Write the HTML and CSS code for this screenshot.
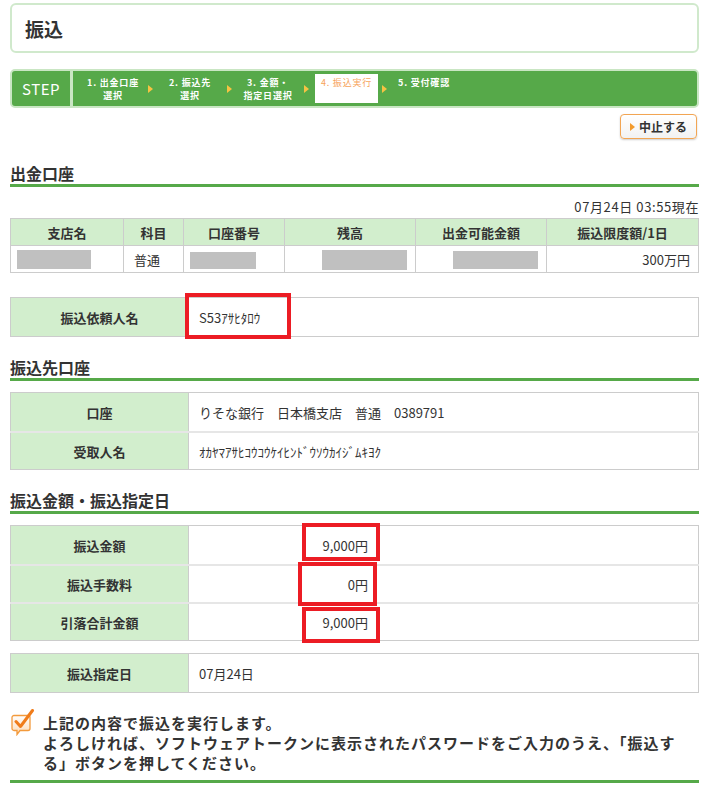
FILE: index.html
```html
<!DOCTYPE html>
<html lang="ja">
<head>
<meta charset="UTF-8">
<title>振込</title>
<link rel="stylesheet" href="styles.css">
</head>
<body>
<div class="page">
    <div class="title-box">
        <h1>振込</h1>
    </div>

    <div class="step-bar">
        <div class="step-label">STEP</div>
        <ol class="steps">
            <li class="step s1">1. 出金口座<br>選択</li>
            <li class="arrow a1"></li>
            <li class="step s2">2. 振込先<br>選択</li>
            <li class="arrow"></li>
            <li class="step s3">3. 金額・<br>指定日選択</li>
            <li class="arrow"></li>
            <li class="step s4 current">4. 振込実行</li>
            <li class="arrow"></li>
            <li class="step s5">5. 受付確認</li>
        </ol>
    </div>

    <div class="actions">
        <button class="btn-cancel"><span class="tri"></span>中止する</button>
    </div>

    <h2 class="sec-title">出金口座</h2>
    <p class="stamp">07月24日 03:55現在</p>
    <table class="acct">
        <tr>
            <th class="c1">支店名</th>
            <th class="c2">科目</th>
            <th class="c3">口座番号</th>
            <th class="c4">残高</th>
            <th class="c5">出金可能金額</th>
            <th class="c6">振込限度額/1日</th>
        </tr>
        <tr>
            <td><span class="hide h-branch"></span></td>
            <td class="kind">普通</td>
            <td><span class="hide h-no"></span></td>
            <td class="num"><span class="hide h-bal"></span></td>
            <td class="num"><span class="hide h-avail"></span></td>
            <td class="num">300万円</td>
        </tr>
    </table>

    <div class="marked req">
        <table class="info">
            <tr>
                <th>振込依頼人名</th>
                <td>S53ｱｻﾋﾀﾛｳ</td>
            </tr>
        </table>
        <span class="mark m-req"></span>
    </div>

    <h2 class="sec-title">振込先口座</h2>
    <table class="info">
        <tr>
            <th>口座</th>
            <td>りそな銀行　日本橋支店　普通　0389791</td>
        </tr>
        <tr>
            <th>受取人名</th>
            <td>ｵｶﾔﾏｱｻﾋｺｳｺｳｹｲﾋﾝﾄﾞｳｿｳｶｲｼﾞﾑｷﾖｸ</td>
        </tr>
    </table>

    <h2 class="sec-title">振込金額・振込指定日</h2>
    <div class="marked">
        <table class="info">
            <tr>
                <th>振込金額</th>
                <td><span class="amount">9,000円</span></td>
            </tr>
            <tr>
                <th>振込手数料</th>
                <td><span class="amount">0円</span></td>
            </tr>
            <tr>
                <th>引落合計金額</th>
                <td><span class="amount">9,000円</span></td>
            </tr>
        </table>
        <span class="mark m-1"></span>
        <span class="mark m-2"></span>
        <span class="mark m-3"></span>
    </div>

    <table class="info date">
        <tr>
            <th>振込指定日</th>
            <td>07月24日</td>
        </tr>
    </table>

    <div class="notice">
        <svg class="check" width="26" height="27" viewBox="0 0 26 27">
            <defs>
                <linearGradient id="g" x1="0" y1="0" x2="0" y2="1">
                    <stop offset="0" stop-color="#ffffff"/>
                    <stop offset="1" stop-color="#fcd9b4"/>
                </linearGradient>
            </defs>
            <path d="M3 6.5 h14 a2 2 0 0 1 2 2 v11 a2 2 0 0 1 -2 2 h-8 l-3 4 v-4 h-3 a2 2 0 0 1 -2 -2 v-11 a2 2 0 0 1 2 -2 z" fill="url(#g)" stroke="#f39a3c" stroke-width="1.3"/>
            <path d="M5 12.5 l4.5 5 l12 -16" fill="none" stroke="#f07c1a" stroke-width="3" stroke-linecap="round" stroke-linejoin="round"/>
        </svg>
        <p>上記の内容で振込を実行します。<br>よろしければ、ソフトウェアトークンに表示されたパスワードをご入力のうえ、「振込する」ボタンを押してください。</p>
    </div>
</div>
</body>
</html>
```

FILE: styles.css
```css
body{
    margin: 0;
    background-color: #fff;
    color: #333;
    font-family: "Noto Sans CJK JP", "Noto Sans", sans-serif;
    font-size: 13px;
}

.page{
    padding: 3px 10px 0;
}

.title-box{
    height: 50px;
    box-sizing: border-box;
    border: 2px solid #d0e9cc;
    border-radius: 6px;
    display: flex;
    align-items: center;
    padding-left: 13px;
}

.title-box h1{
    margin: 0;
    font-size: 19px;
    font-weight: 700;
}

/* step bar */
.step-bar{
    margin-top: 16px;
    height: 39px;
    box-sizing: border-box;
    border: 2px solid #c9e6c3;
    border-radius: 5px;
    background-color: #56a949;
    display: flex;
    color: #fff;
}

.step-label{
    width: 58px;
    border-right: 3px solid #c9e6c3;
    display: flex;
    align-items: center;
    justify-content: center;
    font-size: 15px;
    letter-spacing: 0.5px;
}

.steps{
    list-style: none;
    margin: 0;
    padding: 0 0 0 7px;
    display: flex;
}

.step{
    padding-top: 5px;
    font-size: 9px;
    line-height: 13px;
    letter-spacing: 0.8px;
    font-weight: 700;
    text-align: center;
}

.s1{ width: 66px; }
.s2{ width: 74px; }
.s3{ width: 72px; }
.s5{ width: 74px; }

.s4{
    width: 63px;
    margin: 3px 4px 3px 6px;
    padding-top: 2px;
    background-color: #fff;
    color: #f7a35a;
    font-weight: 400;
}

.arrow{
    align-self: center;
    width: 0;
    height: 0;
    border-left: 5px solid #f6c343;
    border-top: 4.5px solid transparent;
    border-bottom: 4.5px solid transparent;
}

.a1{ margin-left: 2px; }

/* cancel */
.actions{
    margin-top: 6px;
    display: flex;
    justify-content: flex-end;
    padding-right: 2px;
}

.btn-cancel{
    width: 77px;
    height: 25px;
    border: 1px solid #f2a553;
    border-radius: 4px;
    background: linear-gradient(#fff, #f2f2f2);
    box-shadow: 0 1px 2px rgba(0,0,0,0.2);
    display: flex;
    align-items: center;
    padding: 0 0 0 9px;
    font-family: inherit;
    font-size: 12px;
    font-weight: 700;
    color: #333;
}

.btn-cancel .tri{
    width: 0;
    height: 0;
    border-left: 5px solid #f39a2b;
    border-top: 4.5px solid transparent;
    border-bottom: 4.5px solid transparent;
    margin-right: 4px;
}

/* sections */
.sec-title{
    margin: 20px 0 0;
    font-size: 16px;
    line-height: 20px;
    font-weight: 700;
    padding-bottom: 1px;
    border-bottom: 3px solid #56a949;
}

.actions + .sec-title{
    margin-top: 24px;
}

.stamp{
    margin: 11px 0 0;
    text-align: right;
    line-height: 18px;
    letter-spacing: 0.6px;
}

table{
    width: 100%;
    border-collapse: collapse;
}

.acct{
    margin-top: 2px;
    border: 1px solid #ccc;
}

.acct th,
.acct td{
    border: 1px solid #ccc;
    height: 26px;
    padding: 0 6px;
}

.acct th{
    background-color: #d2eecd;
    font-weight: 700;
}

.c1{ width: 100px; }
.c2{ width: 47px; }
.c3{ width: 88px; }
.c4{ width: 118px; }
.c5{ width: 118px; }

.acct .kind{ padding-left: 10px; }
.acct .num{ text-align: right; padding-right: 8px; }

.hide{
    display: inline-block;
    vertical-align: middle;
    background-color: #c0c0c0;
}

.h-branch{ width: 74px; height: 19px; }
.h-no{ width: 66px; height: 17px; }
.h-bal{ width: 85px; height: 20px; }
.h-avail{ width: 85px; height: 18px; }

.info{
    border: 1px solid #ccc;
    margin-top: 11px;
}

.info th,
.info td{
    height: 36px;
    border-top: 2px solid #e6e6e6;
    padding: 0;
}

.info tr:first-child th,
.info tr:first-child td{
    border-top: none;
    height: 38px;
}

.info th{
    width: 177px;
    background-color: #d2eecd;
    border-right: 1px solid #ccc;
    font-weight: 700;
}

.info td{
    padding-left: 10px;
}

.amount{
    display: inline-block;
    width: 169px;
    text-align: right;
}

.date{
    margin-top: 12px;
}

/* red annotation boxes */
.marked{
    position: relative;
}

.marked .info{
    margin-top: 11px;
}

.req{
    margin-top: 24px;
}

.req .info{
    margin-top: 0;
}

.mark{
    position: absolute;
    box-sizing: border-box;
    border: 4px solid #ec1c24;
}

.m-req{ left: 175px; top: -4px; width: 106px; height: 46px; }
.m-1{ left: 292px; top: -2px; width: 78px; height: 38px; }
.m-2{ left: 288px; top: 37px; width: 79px; height: 44px; }
.m-3{ left: 292px; top: 82px; width: 78px; height: 36px; }

/* notice */
.notice{
    margin-top: 20px;
    display: flex;
    align-items: flex-start;
    padding-bottom: 7px;
    border-bottom: 3px solid #56a949;
}

.check{
    margin: -4px 6px 0 1px;
    flex-shrink: 0;
}

.notice p{
    margin: 0;
    font-size: 15px;
    line-height: 20px;
    font-weight: 700;
    letter-spacing: 1px;
}
```
